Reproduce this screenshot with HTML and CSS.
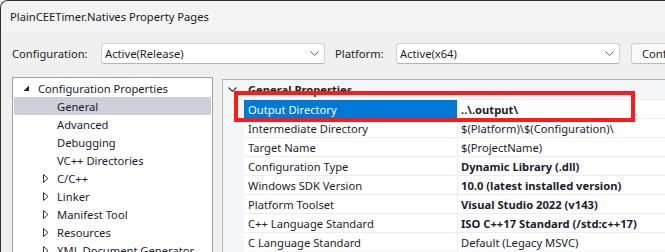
FILE: index.html
```html
<!DOCTYPE html>
<html>

<head>
    <title>PlainCEETimer.Natives Property Pages</title>
    <link rel="stylesheet" href="styles.css">
</head>

<body>
    <div class="window">
        <div class="titlebar">PlainCEETimer.Natives Property Pages</div>
        <div class="dialog-body">
            <div class="toolbar">
                <span class="label label-config">Configuration:</span>
                <div class="combo combo-config">
                    <span>Active(Release)</span>
                    <svg class="chevron" width="9" height="5" viewBox="0 0 9 5"><path d="M0.5 0.5 L4.5 4.5 L8.5 0.5" fill="none" stroke="#606060" stroke-width="1"/></svg>
                </div>
                <span class="label label-platform">Platform:</span>
                <div class="combo combo-platform">
                    <span>Active(x64)</span>
                    <svg class="chevron" width="9" height="5" viewBox="0 0 9 5"><path d="M0.5 0.5 L4.5 4.5 L8.5 0.5" fill="none" stroke="#606060" stroke-width="1"/></svg>
                </div>
                <div class="button">Configuration Manager...</div>
            </div>

            <div class="panes">
                <div class="tree">
                    <div class="tree-row">
                        <span class="arrow"><svg width="7" height="7" viewBox="0 0 7 7"><path d="M6 0.5 L6 6 L0.5 6 Z" fill="#262626"/></svg></span>
                        Configuration Properties
                    </div>
                    <div class="tree-row child selected"><span class="arrow"></span>General</div>
                    <div class="tree-row child"><span class="arrow"></span>Advanced</div>
                    <div class="tree-row child"><span class="arrow"></span>Debugging</div>
                    <div class="tree-row child"><span class="arrow"></span>VC++ Directories</div>
                    <div class="tree-row child"><span class="arrow"><svg width="6" height="9" viewBox="0 0 6 9"><path d="M0.5 0.5 L5 4.5 L0.5 8.5 Z" fill="none" stroke="#333" stroke-width="1"/></svg></span>C/C++</div>
                    <div class="tree-row child"><span class="arrow"><svg width="6" height="9" viewBox="0 0 6 9"><path d="M0.5 0.5 L5 4.5 L0.5 8.5 Z" fill="none" stroke="#333" stroke-width="1"/></svg></span>Linker</div>
                    <div class="tree-row child"><span class="arrow"><svg width="6" height="9" viewBox="0 0 6 9"><path d="M0.5 0.5 L5 4.5 L0.5 8.5 Z" fill="none" stroke="#333" stroke-width="1"/></svg></span>Manifest Tool</div>
                    <div class="tree-row child"><span class="arrow"><svg width="6" height="9" viewBox="0 0 6 9"><path d="M0.5 0.5 L5 4.5 L0.5 8.5 Z" fill="none" stroke="#333" stroke-width="1"/></svg></span>Resources</div>
                    <div class="tree-row child"><span class="arrow"><svg width="6" height="9" viewBox="0 0 6 9"><path d="M0.5 0.5 L5 4.5 L0.5 8.5 Z" fill="none" stroke="#333" stroke-width="1"/></svg></span>XML Document Generator</div>
                </div>

                <div class="grid">
                    <div class="grid-header">
                        <span class="group-toggle"><svg width="9" height="5" viewBox="0 0 9 5"><path d="M0.5 0.5 L4.5 4.5 L8.5 0.5" fill="none" stroke="#333" stroke-width="1.1"/></svg></span>
                        General Properties
                    </div>
                    <div class="grid-row selected">
                        <div class="name">Output Directory</div>
                        <div class="value bold">..\.output\</div>
                    </div>
                    <div class="grid-row">
                        <div class="name">Intermediate Directory</div>
                        <div class="value">$(Platform)\$(Configuration)\</div>
                    </div>
                    <div class="grid-row">
                        <div class="name">Target Name</div>
                        <div class="value">$(ProjectName)</div>
                    </div>
                    <div class="grid-row">
                        <div class="name">Configuration Type</div>
                        <div class="value bold">Dynamic Library (.dll)</div>
                    </div>
                    <div class="grid-row">
                        <div class="name">Windows SDK Version</div>
                        <div class="value bold">10.0 (latest installed version)</div>
                    </div>
                    <div class="grid-row">
                        <div class="name">Platform Toolset</div>
                        <div class="value bold">Visual Studio 2022 (v143)</div>
                    </div>
                    <div class="grid-row">
                        <div class="name">C++ Language Standard</div>
                        <div class="value bold">ISO C++17 Standard (/std:c++17)</div>
                    </div>
                    <div class="grid-row">
                        <div class="name">C Language Standard</div>
                        <div class="value">Default (Legacy MSVC)</div>
                    </div>
                </div>
            </div>
        </div>

        <!-- annotation drawn over the grid -->
        <div class="highlight-box"></div>
    </div>
</body>

</html>
```

FILE: styles.css
```css
html,
body {
    margin: 0;
    padding: 0;
    overflow: hidden;
    background-color: #f0f0f0;
}

body {
    font-family: "Noto Sans", sans-serif;
    font-size: 11.2px;
    color: #1e1e1e;
}

.window {
    position: relative;
    width: 720px;
    height: 260px;
    background-color: #f0f0f0;
    border-top: 1px solid #2e2e2e;
    border-left: 1px solid #2e2e2e;
    border-top-left-radius: 8px;
    overflow: hidden;
}

.titlebar {
    height: 31px;
    display: flex;
    align-items: center;
    padding-left: 9px;
    background-color: #f3f3f3;
    color: #1a1a1a;
}

.dialog-body {
    padding: 11px 0 0 11px;
}

/* Configuration / Platform row */
.toolbar {
    display: flex;
    align-items: center;
    height: 21px;
}

.toolbar > * {
    flex-shrink: 0;
}

.label {
    display: inline-block;
}

.label-config {
    width: 89px;
}

.label-platform {
    width: 61px;
    margin-left: 10px;
}

.combo {
    box-sizing: border-box;
    height: 21px;
    display: flex;
    align-items: center;
    justify-content: space-between;
    padding: 0 5px 0 3px;
    background-color: #fff;
    border: 1px solid #d0d0d0;
    border-bottom-color: #b4b4b4;
    border-radius: 3px;
}

.combo-config {
    width: 224px;
}

.combo-platform {
    width: 224px;
}

.chevron {
    display: block;
}

.button {
    box-sizing: border-box;
    height: 21px;
    margin-left: 11px;
    padding: 0 10px;
    display: flex;
    align-items: center;
    white-space: nowrap;
    background-color: #fbfbfb;
    border: 1px solid #d0d0d0;
    border-bottom-color: #bcbcbc;
    border-radius: 4px;
}

/* Left tree + right grid */
.panes {
    display: flex;
    align-items: flex-start;
    margin-top: 13px;
}

.tree {
    flex-shrink: 0;
    width: 199px;
    height: 200px;
    padding-top: 1px;
    background-color: #fff;
    border: 1px solid #a0a0a0;
}

.tree-row {
    height: 18px;
    display: flex;
    align-items: center;
    padding-left: 10px;
    white-space: nowrap;
    color: #1b1b2e;
}

.tree-row .arrow {
    width: 15px;
    display: flex;
    align-items: center;
}

.tree-row.child {
    padding-left: 30px;
}

.tree-row.child .arrow {
    width: 14px;
}

.tree-row.selected {
    margin: 0 1px;
    padding-left: 29px;
    background-color: #cdcfda;
}

.grid {
    flex: 1;
    height: 200px;
    margin-top: 2px;
    margin-left: 9px;
    background-color: #f5f6f8;
    border-top: 1px solid #b4b4b4;
    border-left: 1px solid #b4b4b4;
}

.grid-header {
    height: 19px;
    display: flex;
    align-items: center;
    font-weight: bold;
    color: #1e1e1e;
}

.group-toggle {
    width: 25px;
    padding-left: 5px;
    box-sizing: border-box;
    display: flex;
    align-items: center;
}

.grid-row {
    display: flex;
    height: 19px;
    box-sizing: border-box;
    margin-left: 21px;
    background-color: #fff;
    border-top: 1px solid #ededed;
}

.grid-row .name {
    width: 214px;
    padding-left: 4px;
    box-sizing: border-box;
    display: flex;
    align-items: center;
    white-space: nowrap;
    border-right: 1px solid #ededed;
}

.grid-row .value {
    flex: 1;
    padding-left: 3px;
    display: flex;
    align-items: center;
    white-space: nowrap;
    color: #1b1b2e;
}

.grid-row .bold {
    font-weight: bold;
}

.grid-row.selected .name {
    background-color: #0078d7;
    color: #fff;
}

/* Red annotation rectangle */
.highlight-box {
    position: absolute;
    left: 233px;
    top: 90px;
    width: 393px;
    height: 23px;
    border: 4px solid #fd1a1a;
}
```
